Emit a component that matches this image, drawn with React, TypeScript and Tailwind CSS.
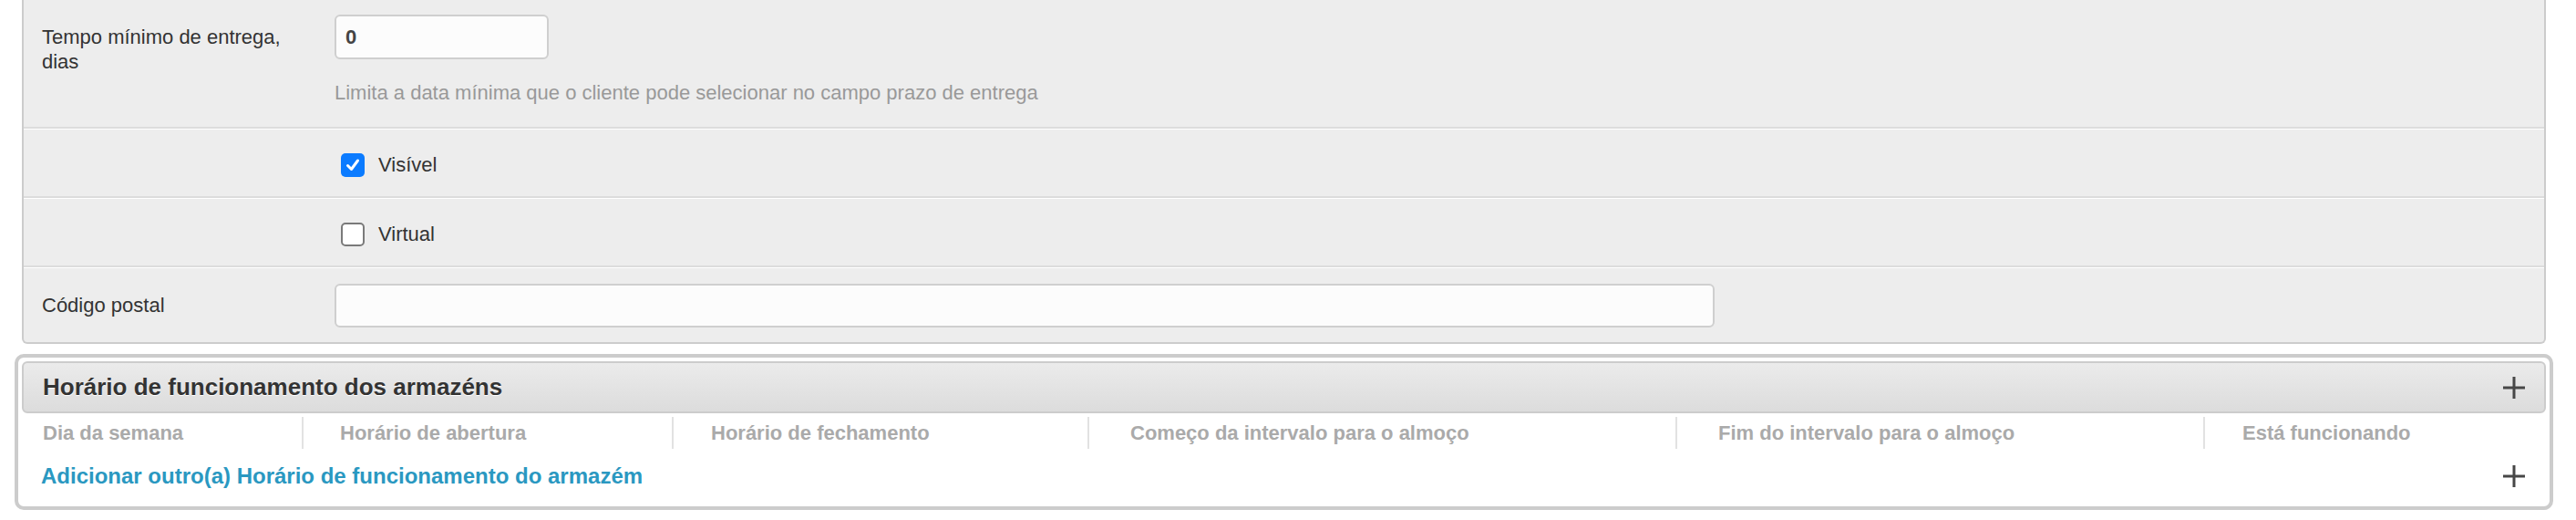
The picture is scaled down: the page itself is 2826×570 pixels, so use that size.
import React from "react";

function Plus() {
  return (
    <svg width="24" height="24" viewBox="0 0 24 24" className="shrink-0">
      <line x1="12" y1="0" x2="12" y2="24" stroke="#474747" strokeWidth="3" />
      <line x1="0" y1="12" x2="24" y2="12" stroke="#474747" strokeWidth="3" />
    </svg>
  );
}

function Checkbox({ checked }: { checked: boolean }) {
  if (checked) {
    return (
      <span className="flex items-center justify-center w-[26px] h-[26px] rounded-[5px] bg-[#0b7bff]">
        <svg width="18" height="18" viewBox="0 0 18 18">
          <path
            d="M3.5 9.5 L7.5 13.5 L14.5 4"
            fill="none"
            stroke="#fff"
            strokeWidth="3"
            strokeLinecap="round"
            strokeLinejoin="round"
          />
        </svg>
      </span>
    );
  }
  return (
    <span className="block w-[26px] h-[26px] rounded-[5px] bg-white border-2 border-[#7a7a7a]"></span>
  );
}

const columns = [
  { label: "Dia da semana", w: "pl-[23px]" },
  { label: "Horário de abertura", w: "pl-[40px]" },
  { label: "Horário de fechamento", w: "pl-[41px]" },
  { label: "Começo da intervalo para o almoço", w: "pl-[45px]" },
  { label: "Fim do intervalo para o almoço", w: "pl-[45px]" },
  { label: "Está funcionando", w: "pl-[41px]" },
];

export default function App() {
  return (
    <div className="w-[2826px] h-[570px] bg-white font-['Liberation_Sans',Arial,sans-serif] text-[22px] text-[#333]">
      {/* settings panel */}
      <div className="ml-[24px] mr-[33px] bg-[#ededed] border-x-2 border-b-2 border-[#cccccc] rounded-b-[6px]">
        <div className="grid grid-cols-[341px_1fr] border-b-2 border-[#dcdcdc]">
          <div className="pl-[20px] pr-[40px] pt-[27px] leading-[27px]">
            Tempo mínimo de entrega, dias
          </div>
          <div className="pt-[16px] pb-[24px]">
            <div className="w-[235px] h-[49px] bg-[#fcfcfc] border-2 border-[#cfcfcf] rounded-[6px] flex items-center pl-[10px] font-bold text-[#444]">
              0
            </div>
            <p className="mt-[23px] leading-[27px] text-[#999]">
              Limita a data mínima que o cliente pode selecionar no campo prazo de entrega
            </p>
          </div>
        </div>

        <div className="grid grid-cols-[341px_1fr] h-[76px] border-t border-white border-b-2 border-b-[#dcdcdc]">
          <div></div>
          <label className="flex items-center gap-[15px] pl-[7px] pt-[4px]">
            <Checkbox checked={true} />
            <span>Visível</span>
          </label>
        </div>

        <div className="grid grid-cols-[341px_1fr] h-[76px] border-t border-white border-b-2 border-b-[#dcdcdc]">
          <div></div>
          <label className="flex items-center gap-[15px] pl-[7px] pt-[4px]">
            <Checkbox checked={false} />
            <span>Virtual</span>
          </label>
        </div>

        <div className="grid grid-cols-[341px_1fr] items-center h-[82px] border-t border-white">
          <div className="pl-[20px]">Código postal</div>
          <div className="w-[1514px] h-[48px] bg-[#fcfcfc] border-2 border-[#cfcfcf] rounded-[6px]"></div>
        </div>
      </div>

      {/* opening hours */}
      <div className="mt-[11px] ml-[16px] mr-[25px] bg-white border-4 border-[#cccccc] rounded-[10px] p-[4px]">
        <div className="h-[57px] flex items-center justify-between pl-[21px] pr-[21px] border-2 border-[#cccccc] rounded-[6px] bg-gradient-to-b from-[#ebebeb] to-[#dcdcdc]">
          <h2 className="text-[26px] font-bold text-[#333] [text-shadow:0_1px_0_#fff]">
            Horário de funcionamento dos armazéns
          </h2>
          <Plus />
        </div>

        <div className="grid grid-cols-[307px_406px_456px_645px_579px_1fr] pt-[4px]">
          {columns.map((c, i) => (
            <div
              key={i}
              className={`h-[35px] flex items-center font-bold text-[22px] text-[#aaaaaa] ${c.w} ${
                i > 0 ? "border-l-2 border-[#e2e2e2]" : ""
              }`}
            >
              {c.label}
            </div>
          ))}
        </div>

        <div className="h-[59px] flex items-center justify-between pl-[21px] pr-[23px]">
          <a className="font-bold text-[24px] text-[#2a98c1]">
            Adicionar outro(a) Horário de funcionamento do armazém
          </a>
          <Plus />
        </div>
      </div>
    </div>
  );
}
